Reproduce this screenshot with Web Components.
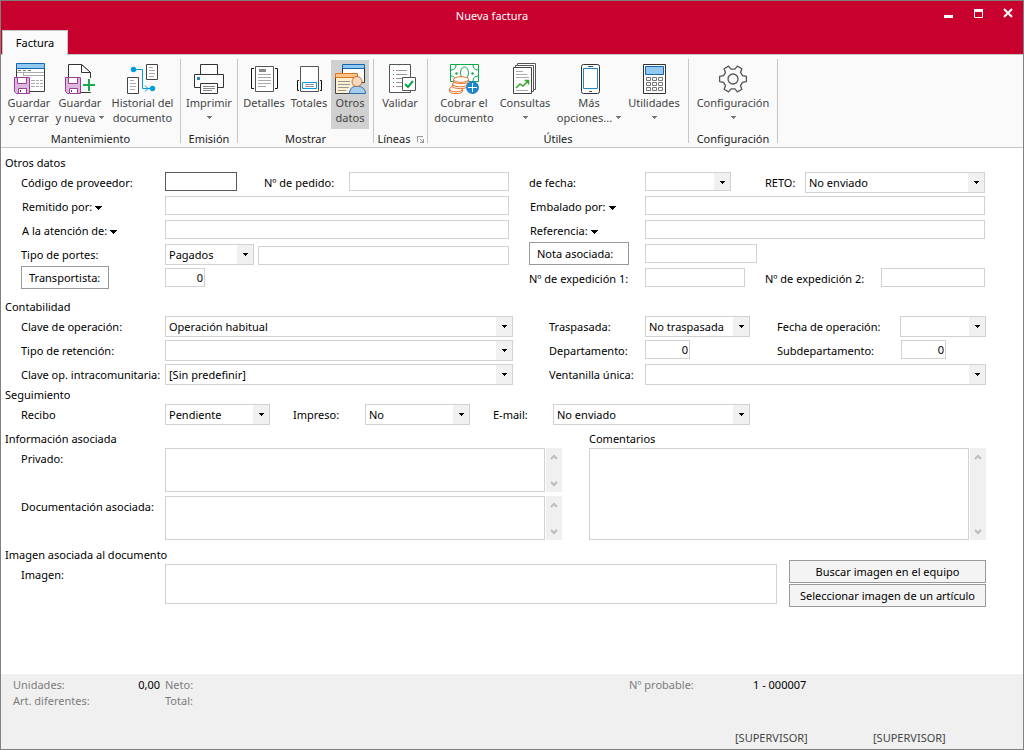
<!DOCTYPE html>
<html lang="es">
<head>
<meta charset="utf-8">
<title>Nueva factura</title>
<style>
  body { margin: 0; font: 11px/16px "Noto Sans", "Open Sans", sans-serif; color: #000; background: #fff; }
</style>
</head>
<body>
<invoice-window></invoice-window>

<script>
const arrow = () => `<svg class="arrow" width="5" height="3" viewBox="0 0 5 3" shape-rendering="crispEdges" fill="currentColor" aria-hidden="true"><path d="M0 0h5v1H4v1H3v1H2V2H1V1H0z"/></svg>`;
const menuArrow = () => `<svg class="arrow" width="7" height="4" viewBox="0 0 7 4" shape-rendering="crispEdges" fill="currentColor" aria-hidden="true"><path d="M0 0h7v1H6v1H5v1H4v1H3V3H2V2H1V1H0z"/></svg>`;

const floppy = `
  <path fill="#dfb6dd" stroke="#9a3f98" d="M1.5 15.5h15v16h-13l-2-2z"/>
  <path fill="#fff" stroke="#9a3f98" d="M4.5 15.5h9v6h-9z"/>
  <path fill="#fff" stroke="#9a3f98" d="M5.5 26.5h8v5h-8z"/><path stroke="#444" d="M7.5 28v2"/>`;

const gearPath = (() => {
  const pts = [];
  for (let i = 0; i < 6; i++) {
    for (const [r, a] of [[10, -19], [13.6, -11], [13.6, 11], [10, 19]]) {
      const t = (i * 60 + a) * Math.PI / 180;
      pts.push((16 + r * Math.cos(t)).toFixed(1) + ' ' + (17 + r * Math.sin(t)).toFixed(1));
    }
  }
  return 'M' + pts.join('L') + 'z';
})();

const keys = (() => {
  let d = '';
  for (const y of [15.5, 20.5, 25.5]) for (const x of [8.5, 14.5, 20.5]) d += `M${x} ${y}h4v3h-4z`;
  return d;
})();

const ICONS = {
  saveClose: `
    <path fill="#fff" stroke="#3c3c3c" d="M3.5 5.5h28v24h-28z"/>
    <path fill="#92c9f2" stroke="#1467b0" d="M3.5 1.5h28v5h-28z"/>
    <path stroke="#777" d="M5 8.5h3M10 8.5h3M15 8.5h3"/><path stroke="#aaa" d="M4 10.5h27M10.5 11v3M11 13.5h20"/>
    <path stroke="#aaa" d="M18 18.5h4M23 18.5h3M27 18.5h3M18 21.5h4M23 21.5h3M27 21.5h3M18 24.5h4M23 24.5h3M27 24.5h3"/>${floppy}`,
  saveNew: `
    <path fill="#fff" stroke="#333" d="M4.5 30.5v-28h13l9 8v20z"/><path fill="#fff" stroke="#333" d="M17.5 2.5v8h9z"/>
    ${floppy}<path fill="#fafafa" d="M18 16h14v14H18z"/><path stroke="#18a850" stroke-width="2" d="M19 23h12M25 17v12"/>`,
  history: `
    <path fill="#fff" stroke="#444" d="M19.5 2.5h11v15h-11zM.5 15.5h11v16H.5z"/>
    <path stroke="#aaa" d="M22 5.5h4M22 8.5h6M22 11.5h6M22 14.5h5M3 18.5h4M3 21.5h6M3 24.5h6M3 27.5h5"/>
    <path fill="none" stroke="#009de0" d="M7 7.5h8.5v19h9M18 23.5l3 3-3 3"/>
    <circle cx="6.5" cy="7.5" r="2.7" fill="#009de0"/><circle cx="25.5" cy="26.5" r="2.7" fill="#009de0"/>`,
  print: `
    <path fill="#fff" stroke="#333" d="M7.5 12V2.5h17V12M1.5 12.5h29v13h-29z"/>
    <path fill="#fff" stroke="#333" d="M7.5 21.500h17v10h-17z"/><path fill="#2088d0" d="M4 15h3v3H4z"/>
    <path stroke="#888" d="M10 24.5h12M10 26.5h12M10 28.5h9"/>`,
  details: `
    <path fill="#fff" stroke="#555" d="M7.5 4.5h18v25h-18z"/><path fill="none" stroke="#111" d="M6 6.5H3.500v20H6M27 6.5h2.500v20H27"/>
    <path fill="#888" d="M11 7h7v3h-7z"/><path stroke="#aaa" d="M10 12.5h13M10 15.5h13M10 18.5h13M10 21.5h13M10 24.5h8"/>`,
  totals: `
    <path fill="#fff" stroke="#555" d="M7.5 4.5h18v25h-18z"/><path fill="none" stroke="#111" d="M6 18.5H4.500v10H6M27 18.5h1.500v10H27"/>
    <path fill="#fff" stroke="#009de0" d="M9.5 20.5h14v6h-14z"/><path stroke="#999" d="M12 22.5h9M12 24.5h9"/>`,
  others: `
    <path fill="#fff" stroke="#333" d="M8.5 5.5h22v15h-22z"/><path fill="#92c9f2" stroke="#1467b0" d="M8.5 2.5h22v4h-22z"/>
    <path fill="#fdf0d2" stroke="#444" d="M1.5 13.5h22v18h-22z"/><path fill="#ffc58a" stroke="#e0721b" d="M1.5 11.5h22v4h-22z"/>
    <path stroke="#999" d="M4 19.5h12M4 22.5h12M4 25.5h11M4 28.5h8"/>
    <path fill="#a5cdee" stroke="#2f6da8" d="M15.5 31.5c0-4 2-6.500 5-7h5c3 .5 6 3 6 7z"/>
    <circle cx="23" cy="19.5" r="5" fill="#fbd9bd" stroke="#b5713c"/>`,
  validate: `
    <path fill="#fff" stroke="#555" d="M5.5 2.5h21v28h-21z"/>
    <path stroke="#999" d="M12 8.5h11M12 12.5h11M12 16.5h7M12 20.5h6M12 24.5h6"/>
    <path stroke="#c33" d="M9 8.5h1M9 16.5h1M9 24.5h1"/><path stroke="#2a5" d="M9 12.5h1M9 20.5h1"/>
    <path fill="#fff" stroke="#555" d="M18.5 15.5h13v13h-13z"/><path fill="none" stroke="#0ca64a" stroke-width="2" d="M21 22l3 3 5-6"/>`,
  charge: `
    <path fill="#fff" stroke="#0ca64a" d="M2.5 2.5h28v17h-28z"/>
    <path fill="none" stroke="#0ca64a" d="M3 8c3 0 5-2 5-5M30 8c-3 0-5-2-5-5M30 14c-3 0-5 2-5 5M3 14c2 0 4 1 4 3M14 16c-3-5-1-11 2.500-11s5.500 6 2.500 11"/>
    <circle cx="8.500" cy="11.500" r="1.200" fill="#0ca64a"/><circle cx="24.500" cy="11.500" r="1.200" fill="#0ca64a"/>
    <path fill="#fafafa" stroke="#e8722a" d="M1.500 27v2c0 3.500 13 3.500 13 0v-2"/>
    <ellipse cx="8" cy="27" rx="6.500" ry="2.800" fill="#fff" stroke="#e8722a"/>
    <path fill="#fff" stroke="#e8722a" d="M4.500 22v2c0 3.500 15 3.500 15 0v-2"/>
    <ellipse cx="12" cy="22" rx="7.500" ry="2.800" fill="#fff" stroke="#e8722a"/>
    <path fill="#fff" stroke="#e8722a" d="M5.500 17v2c0 3.500 15 3.500 15 0v-2"/>
    <ellipse cx="13" cy="17.500" rx="7.500" ry="2.800" fill="#fff" stroke="#e8722a"/>
    <circle cx="24.500" cy="25.500" r="6.500" fill="#1f86cc"/><path stroke="#fff" d="M20 25.500h9M24.500 21v9"/>`,
  queries: `
    <path fill="#fff" stroke="#555" d="M8.5 1.5h18v26h-18z"/><path fill="#fff" stroke="#555" d="M6.5 3.5h18v26h-18z"/>
    <path fill="#fff" stroke="#444" d="M4.5 5.5h18v26h-18z"/>
    <path stroke="#aaa" d="M7 9.5h7M7 12.5h11M7 15.5h13M7 28.5h12"/>
    <path fill="none" stroke="#35a82c" stroke-width="1.500" d="M7 26l4-4 3 2 5-5M15.500 18.500h4v4"/>`,
  phone: `
    <rect x="8.500" y="2.500" width="18" height="29" rx="2" fill="#fff" stroke="#333"/>
    <path fill="#fff" stroke="#1f86cc" d="M10.500 6.500h14v20h-14z"/><path stroke="#555" d="M15 4.500h5M16 29.500h3"/>`,
  calc: `
    <path fill="#fff" stroke="#333" d="M5.5 2.5h22v29h-22z"/><path fill="#92c9f2" stroke="#1467b0" d="M7.5 4.5h18v8h-18z"/>
    <path fill="#fff" stroke="#777" d="${keys}"/>`,
  gear: `<path fill="none" stroke="#555" stroke-width="1.300" stroke-linejoin="round" d="${gearPath}"/><circle cx="16" cy="17" r="5" fill="none" stroke="#555" stroke-width="1.300"/>`
};

const CONTROL = `
  :host { display: flex; min-width: 0; flex: var(--grow, 1) 1 auto; }
  label { box-sizing: border-box; flex: none; width: var(--lw, 144px); line-height: 22px; white-space: nowrap; color: #000; }
  label .arrow { vertical-align: middle; margin: 0 0 1px 3px; }
  label.none { display: none; }
  :host([menu]) label { padding-left: 1px; }
  input, select, textarea { box-sizing: border-box; font: inherit; color: inherit; border: 1px solid #d2d2d2; border-radius: 0;
    background: #fff; margin: 0; outline: 0; min-width: 0; width: var(--w, auto); flex: 1 0 0; display: block; }
  :host([fixed]) input, :host([fixed]) select { flex: none; }
`;

class TextField extends HTMLElement {
  connectedCallback() {
    const a = n => this.getAttribute(n) || '';
    const label = a('label');
    this.attachShadow({ mode: 'open' }).innerHTML = `
      <style>${CONTROL}
        input { height: 19px; padding: 0 4px; }
        :host([numeric]) input { text-align: right; padding: 0 1px; }
        :host([active]) input { border-color: #5a5a5a; }
        :host([tall]) input { height: 40px; }
      </style>
      <label for="c" class="${label ? '' : 'none'}">${label}${this.hasAttribute('menu') ? menuArrow() : ''}</label>
      <input id="c" type="text" value="${a('value')}" ${a('name') ? `aria-label="${a('name')}"` : ''}>`;
  }
}

class SelectField extends HTMLElement {
  connectedCallback() {
    const a = n => this.getAttribute(n) || '';
    this.attachShadow({ mode: 'open' }).innerHTML = `
      <style>${CONTROL}
        select { appearance: none; height: 21px; padding: 0 18px 0 3px;
          background:
            linear-gradient(#000, #000) right 5px top 8px / 5px 1px no-repeat,
            linear-gradient(#000, #000) right 6px top 9px / 3px 1px no-repeat,
            linear-gradient(#000, #000) right 7px top 10px / 1px 1px no-repeat,
            linear-gradient(#f0f0f0, #f0f0f0) right 0 top 0 / 16px 100% no-repeat, #fff; }
        :host([low]) select { height: 19px; }
      </style>
      <label for="c">${a('label')}</label>
      <select id="c"><option>${a('value')}</option></select>`;
  }
}

class MemoField extends HTMLElement {
  connectedCallback() {
    const a = n => this.getAttribute(n) || '';
    const label = a('label');
    this.attachShadow({ mode: 'open' }).innerHTML = `
      <style>${CONTROL}
        textarea { resize: none; overflow: hidden; padding: 2px 4px; height: var(--h, 44px); }
        .scroll { flex: none; display: flex; flex-direction: column; justify-content: space-between; width: 16px; margin-left: 1px; background: #f0f0f0; }
        button { border: 0; padding: 0; background: none; height: 17px; display: grid; place-items: center; }
        svg { fill: none; stroke: #bdbdbd; stroke-width: 2; }
      </style>
      <label for="c" class="${label ? '' : 'none'}">${label}</label>
      <textarea id="c" ${a('name') ? `aria-label="${a('name')}"` : ''}></textarea>
      <div class="scroll">
        <button type="button" aria-label="Subir"><svg width="8" height="6"><path d="M1 5l3-3 3 3"/></svg></button>
        <button type="button" aria-label="Bajar"><svg width="8" height="6"><path d="M1 1l3 3 3-3"/></svg></button>
      </div>`;
  }
}

class PushButton extends HTMLElement {
  connectedCallback() {
    this.attachShadow({ mode: 'open' }).innerHTML = `
      <style>
        :host { display: block; }
        button { box-sizing: border-box; width: 100%; height: 23px; padding: 0 7px; font: inherit; color: #000;
          border: 1px solid #9a9a9a; background: var(--face, #fff); text-align: var(--align, left); white-space: nowrap; }
      </style>
      <button type="button"><slot></slot></button>`;
  }
}

class RibbonButton extends HTMLElement {
  connectedCallback() {
    const more = this.hasAttribute('menu');
    const second = this.getAttribute('second') || '';
    this.attachShadow({ mode: 'open' }).innerHTML = `
      <style>
        :host { display: block; width: var(--w); }
        button { width: 100%; height: 69px; padding: 2px 0 0; border: 0; background: none; font: inherit; line-height: 15px;
          color: #444; display: flex; flex-direction: column; align-items: center; white-space: nowrap; }
        :host([pressed]) button { background: #d0d0d0; }
        .icon { display: block; flex: none; margin-bottom: 1px; }
        .line { display: flex; align-items: center; justify-content: center; gap: 4px; height: 15px; }
        .arrow { color: #777; }
      </style>
      <button type="button">
        <svg class="icon" width="32" height="32" viewBox="0 0 32 32" aria-hidden="true">${ICONS[this.getAttribute('icon')]}</svg>
        <span class="line"><slot></slot></span>
        <span class="line">${second}${more ? arrow() : ''}</span>
      </button>`;
  }
}

class RibbonGroup extends HTMLElement {
  connectedCallback() {
    this.attachShadow({ mode: 'open' }).innerHTML = `
      <style>
        :host { display: block; padding: 5px 1px 0 0; background: linear-gradient(#c6c6c6, #c6c6c6) right 0 top 4px / 1px 84px no-repeat; }
        .buttons { display: flex; padding: var(--pad, 0); }
        .caption { display: flex; justify-content: center; align-items: center; gap: 6px; margin-top: 2px; line-height: 16px; color: #222; }
        .launch { border: 0; padding: 0; background: none; height: 7px; display: flex; }
      </style>
      <div class="buttons"><slot></slot></div>
      <div class="caption">${this.getAttribute('caption')}${this.hasAttribute('launcher') ? `
        <button class="launch" type="button" aria-label="Opciones de líneas"><svg width="7" height="7" fill="none" stroke="#999" shape-rendering="crispEdges"><path d="M.5 6V.5H6M3 3l3 3M6.500 3v3.500H3"/></svg></button>` : ''}</div>`;
  }
}

class TitleBar extends HTMLElement {
  connectedCallback() {
    this.attachShadow({ mode: 'open' }).innerHTML = `
      <style>
        :host { display: block; background: #c8002d; color: #fff; }
        header { display: flex; height: 29px; padding-left: 50px; }
        h1 { flex: 1; margin: 0; font: inherit; line-height: 30px; text-align: center; }
        header button { width: 30px; height: 24px; border: 0; padding: 0; background: none; display: grid; place-items: center; }
        nav { display: flex; padding-left: 1px; height: 24px; }
        nav a { box-sizing: border-box; position: relative; width: 66px; height: 25px; border: 1px solid #c6c6c6; border-bottom: 0;
          background: #fafafa; color: #000; text-decoration: none; text-align: center; line-height: 24px; }
      </style>
      <header>
        <h1><slot></slot></h1>
        <button type="button" aria-label="Minimizar"><svg width="9" height="11"><path fill="#fff" d="M0 7h9v3H0z"/></svg></button>
        <button type="button" aria-label="Maximizar"><svg width="9" height="9"><path fill="none" stroke="#fff" d="M.5.5h8v8h-8z"/><path fill="#fff" d="M0 0h9v3H0z"/></svg></button>
        <button type="button" aria-label="Cerrar"><svg width="10" height="10"><path stroke="#fff" stroke-width="2" d="M1 1l8 8M9 1L1 9"/></svg></button>
      </header>
      <nav><a href="#factura">Factura</a></nav>`;
  }
}

class FormSection extends HTMLElement {
  connectedCallback() {
    this.attachShadow({ mode: 'open' }).innerHTML = `
      <style>
        :host { display: block; }
        h2 { margin: 0; padding-left: 4px; font: inherit; line-height: 14px; }
        .body { padding: 0 var(--end, 37px) 0 20px; }
      </style>
      <h2>${this.getAttribute('caption')}</h2>
      <div class="body"><slot></slot></div>`;
  }
}

class StatusFooter extends HTMLElement {
  connectedCallback() {
    this.attachShadow({ mode: 'open' }).innerHTML = `
      <style>
        :host { display: block; background: #f0f0f0; color: #7c7c7c; }
        .totals { display: grid; grid-template-columns: 152px minmax(0, 464fr) 124px minmax(0, 270fr); padding: 3px 0 0 12px; }
        .pair { display: flex; justify-content: space-between; padding-right: 5px; }
        b { font-weight: 400; color: #000; }
        .users { display: flex; justify-content: flex-end; padding: 21px 12px 3px; color: #444; }
        .users span { width: 138px; }
      </style>
      <div class="totals">
        <div class="pair">Unidades: <b>0,00</b></div><div>Neto:</div><div>Nº probable:</div><b>1 - 000007</b>
        <div>Art. diferentes:</div><div>Total:</div>
      </div>
      <div class="users"><span>[SUPERVISOR]</span><span>[SUPERVISOR]</span></div>`;
  }
}

class InvoiceWindow extends HTMLElement {
  connectedCallback() {
    this.attachShadow({ mode: 'open' }).innerHTML = `
      <style>
        :host { display: flex; flex-direction: column; box-sizing: border-box; min-height: 100vh; border: 1px solid #808080; background: #fff; }
        .ribbon { display: flex; height: 92px; background: #fafafa; border: solid #c6c6c6; border-width: 1px 0; }
        main { flex: 1; padding: 8px 0 12px; }
        .row { display: grid; grid-template-columns: minmax(0, 488fr) minmax(0, 456fr); column-gap: 20px; height: 24px; }
        .row > div { display: flex; align-items: flex-start; min-width: 0; }
        .accounts .row { grid-template-columns: minmax(0, 492fr) minmax(0, 437fr); column-gap: 36px; }
        .row > .middle { align-items: center; }
        text-field, select-field, memo-field { margin-top: 2px; }
        text-field[fixed], select-field[fixed] { flex: none; }
        .delivery { --end: 38px; }
        .accounts { margin-top: 10px; }
        .tracking { margin-top: 2px; }
        .tracking .line { display: flex; height: 24px; }
        .info { margin-top: 6px; display: grid; grid-template-columns: minmax(0, 588fr) minmax(0, 434fr); }
        .left { --end: 27px; }
        .memos { display: grid; gap: 2px; }
        .image { margin-top: 8px; }
        .image .line { display: grid; grid-template-columns: minmax(0, 1fr) 197px; column-gap: 12px; }
        .image .pick { display: grid; gap: 1px; margin-top: -2px; --face: #f4f4f4; --align: center; align-content: start; }
        .comments h2 { margin: 0; font: inherit; line-height: 14px; }
        .comments { padding-right: 37px; display: flex; flex-direction: column; }
      </style>
      <title-bar>Nueva factura</title-bar>
      <div class="ribbon">
        <ribbon-group caption="Mantenimiento" style="--pad: 0 1px 0 3px">
          <ribbon-button icon="saveClose" second="y cerrar" style="--w: 50px">Guardar</ribbon-button>
          <ribbon-button icon="saveNew" second="y nueva" menu style="--w: 52px">Guardar</ribbon-button>
          <ribbon-button icon="history" second="documento" style="--w: 73px">Historial del</ribbon-button>
        </ribbon-group>
        <ribbon-group caption="Emisión">
          <ribbon-button icon="print" menu style="--w: 56px">Imprimir</ribbon-button>
        </ribbon-group>
        <ribbon-group caption="Mostrar" style="--pad: 0 4px 0 3px">
          <ribbon-button icon="details" style="--w: 46px">Detalles</ribbon-button>
          <ribbon-button icon="totals" style="--w: 44px">Totales</ribbon-button>
          <ribbon-button icon="others" second="datos" pressed style="--w: 38px">Otros</ribbon-button>
        </ribbon-group>
        <ribbon-group caption="Líneas" launcher style="--pad: 0 1px 0 0">
          <ribbon-button icon="validate" style="--w: 52px">Validar</ribbon-button>
        </ribbon-group>
        <ribbon-group caption="Útiles" style="--pad: 0 4px">
          <ribbon-button icon="charge" second="documento" style="--w: 64px">Cobrar el</ribbon-button>
          <ribbon-button icon="queries" menu style="--w: 58px">Consultas</ribbon-button>
          <ribbon-button icon="phone" second="opciones..." menu style="--w: 70px">Más</ribbon-button>
          <ribbon-button icon="calc" menu style="--w: 60px">Utilidades</ribbon-button>
        </ribbon-group>
        <ribbon-group caption="Configuración">
          <ribbon-button icon="gear" menu style="--w: 88px">Configuración</ribbon-button>
        </ribbon-group>
      </div>
      <main id="factura">
        <form-section class="delivery" caption="Otros datos">
          <div class="row">
            <div><text-field fixed active label="Código de proveedor:" style="--w: 72px; margin-right: 27px"></text-field><text-field label="Nº de pedido:" style="--lw: 85px"></text-field></div>
            <div><select-field fixed low label="de fecha:" style="--lw: 116px; --w: 86px; margin-right: 34px"></select-field><select-field label="RETO:" value="No enviado" style="--lw: 40px"></select-field></div>
          </div>
          <div class="row">
            <div><text-field menu label="Remitido por:"></text-field></div>
            <div><text-field menu label="Embalado por:" style="--lw: 116px"></text-field></div>
          </div>
          <div class="row">
            <div><text-field menu label="A la atención de:"></text-field></div>
            <div><text-field menu label="Referencia:" style="--lw: 116px"></text-field></div>
          </div>
          <div class="row">
            <div class="middle"><select-field fixed label="Tipo de portes:" value="Pagados" style="--w: 89px; margin-right: 4px"></select-field><text-field name="Detalle de portes"></text-field></div>
            <div><push-button style="width: 100px; margin-right: 16px">Nota asociada:</push-button><text-field fixed name="Nota asociada" style="--w: 112px"></text-field></div>
          </div>
          <div class="row">
            <div><push-button style="width: 88px; margin-right: 56px">Transportista:</push-button><text-field fixed numeric name="Transportista" value="0" style="--w: 40px"></text-field></div>
            <div><text-field fixed label="Nº de expedición 1:" style="--lw: 116px; --w: 100px; margin-right: 20px"></text-field><text-field label="Nº de expedición 2:" style="--lw: 116px"></text-field></div>
          </div>
        </form-section>

        <form-section class="accounts" caption="Contabilidad">
          <div class="row">
            <div><select-field label="Clave de operación:" value="Operación habitual"></select-field></div>
            <div><select-field fixed label="Traspasada:" value="No traspasada" style="--lw: 96px; --w: 105px; margin-right: 27px"></select-field><select-field label="Fecha de operación:" style="--lw: 123px"></select-field></div>
          </div>
          <div class="row">
            <div><select-field label="Tipo de retención:"></select-field></div>
            <div><text-field fixed numeric label="Departamento:" value="0" style="--lw: 96px; --w: 45px; margin-right: 87px"></text-field><text-field fixed numeric label="Subdepartamento:" value="0" style="--lw: 124px; --w: 45px"></text-field></div>
          </div>
          <div class="row">
            <div><select-field label="Clave op. intracomunitaria:" value="[Sin predefinir]"></select-field></div>
            <div><select-field label="Ventanilla única:" style="--lw: 96px"></select-field></div>
          </div>
        </form-section>

        <form-section class="tracking" caption="Seguimiento">
          <div class="line">
            <select-field fixed label="Recibo" value="Pendiente" style="--w: 105px; margin-right: 23px"></select-field>
            <select-field fixed label="Impreso:" value="No" style="--lw: 72px; --w: 105px; margin-right: 23px"></select-field>
            <select-field fixed label="E-mail:" value="No enviado" style="--lw: 60px; --w: 197px"></select-field>
          </div>
        </form-section>

        <div class="info">
          <form-section class="left" caption="Información asociada">
            <div class="memos">
              <memo-field label="Privado:"></memo-field>
              <memo-field label="Documentación asociada:"></memo-field>
            </div>
          </form-section>
          <div class="comments">
            <h2>Comentarios</h2>
            <memo-field name="Comentarios" style="--h: 92px; --grow: 0"></memo-field>
          </div>
        </div>

        <form-section class="image" caption="Imagen asociada al documento">
          <div class="line">
            <text-field tall label="Imagen:"></text-field>
            <div class="pick">
              <push-button>Buscar imagen en el equipo</push-button>
              <push-button>Seleccionar imagen de un artículo</push-button>
            </div>
          </div>
        </form-section>
      </main>
      <status-footer></status-footer>`;
  }
}

customElements.define('text-field', TextField);
customElements.define('select-field', SelectField);
customElements.define('memo-field', MemoField);
customElements.define('push-button', PushButton);
customElements.define('ribbon-button', RibbonButton);
customElements.define('ribbon-group', RibbonGroup);
customElements.define('title-bar', TitleBar);
customElements.define('form-section', FormSection);
customElements.define('status-footer', StatusFooter);
customElements.define('invoice-window', InvoiceWindow);
</script>
</body>
</html>
